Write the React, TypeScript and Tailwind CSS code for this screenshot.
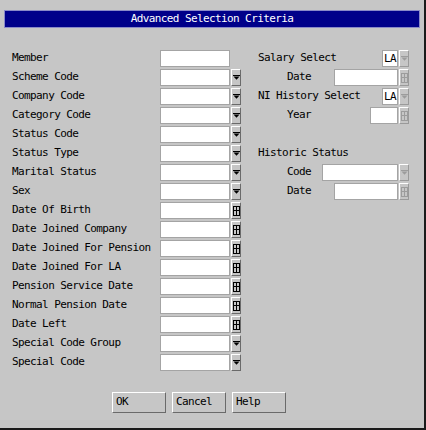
import React from 'react';

const leftRows: { label: string; kind: 'text' | 'drop' | 'cal' }[] = [
    { label: 'Member', kind: 'text' },
    { label: 'Scheme Code', kind: 'drop' },
    { label: 'Company Code', kind: 'drop' },
    { label: 'Category Code', kind: 'drop' },
    { label: 'Status Code', kind: 'drop' },
    { label: 'Status Type', kind: 'drop' },
    { label: 'Marital Status', kind: 'drop' },
    { label: 'Sex', kind: 'drop' },
    { label: 'Date Of Birth', kind: 'cal' },
    { label: 'Date Joined Company', kind: 'cal' },
    { label: 'Date Joined For Pension', kind: 'cal' },
    { label: 'Date Joined For LA', kind: 'cal' },
    { label: 'Pension Service Date', kind: 'cal' },
    { label: 'Normal Pension Date', kind: 'cal' },
    { label: 'Date Left', kind: 'cal' },
    { label: 'Special Code Group', kind: 'drop' },
    { label: 'Special Code', kind: 'drop' },
];

const Caret = ({ disabled }: { disabled?: boolean }) => (
    <svg width="7" height="5" viewBox="0 0 7 5">
        <rect x="0" y="0" width="7" height="1" fill={disabled ? '#9c9c9c' : '#000'} />
        <polygon points="0.5,1.5 6.5,1.5 3.5,4.8" fill={disabled ? '#9c9c9c' : '#000'} />
    </svg>
);

const Cal = ({ disabled }: { disabled?: boolean }) => (
    <svg width="7" height="10" viewBox="0 0 7 10">
        <g fill="none" stroke={disabled ? '#9c9c9c' : '#000'} strokeWidth="1">
            <rect x="0.5" y="0.5" width="6" height="9" />
            <line x1="3.5" y1="0.5" x2="3.5" y2="9.5" />
            <line x1="0.5" y1="4.5" x2="6.5" y2="4.5" />
        </g>
    </svg>
);

const SideBtn = ({ kind, disabled }: { kind: 'drop' | 'cal'; disabled?: boolean }) => (
    <div
        className={
            disabled
                ? 'ml-[1px] w-[10px] h-[17px] flex items-center justify-center border border-t-white border-l-white border-r-[#9a9a9a] border-b-[#9a9a9a]'
                : 'ml-[1px] w-[10px] h-[17px] flex items-center justify-center border border-t-white border-l-white border-r-[#6a6a6a] border-b-[#6a6a6a]'
        }
    >
        {kind === 'drop' ? <Caret disabled={disabled} /> : <Cal disabled={disabled} />}
    </div>
);

const Field = ({ w, children }: { w: string; children?: React.ReactNode }) => (
    <div className={`${w} h-[17px] bg-white border border-[#a4a4a4] flex items-center pl-[1px] leading-none`}>
        {children}
    </div>
);

const App = () => {
    return (
        <div className="w-[426px] h-[430px] bg-[#c6c6c6]">
            <div
                className="w-[426px] h-[430px] bg-[#c6c6c6] border-r-2 border-b-2 border-r-[#1a1a1a] border-b-[#1a1a1a] text-[11px] tracking-[-0.6px] text-black"
                style={{ fontFamily: '"DejaVu Sans Mono", "Liberation Mono", monospace' }}
            >
                <div className="mx-[4px] pt-[10px]">
                    <div className="h-[18px] bg-[#00008a] border border-[#8a8ac8] flex items-center justify-center text-white">
                        Advanced Selection Criteria
                    </div>
                </div>

                <div className="flex pl-[12px] mt-[22px]">
                    <div className="flex flex-col gap-[2px] w-[229px]">
                        {leftRows.map((row) => (
                            <div key={row.label} className="flex items-center h-[17px]">
                                <div className="w-[148px] whitespace-nowrap">{row.label}</div>
                                <Field w="w-[70px]" />
                                {row.kind !== 'text' && <SideBtn kind={row.kind} />}
                            </div>
                        ))}
                    </div>

                    <div className="ml-[17px] w-[151px] flex flex-col gap-[2px]">
                        <div className="flex items-center h-[17px]">
                            <div className="flex-1 whitespace-nowrap">Salary Select</div>
                            <Field w="w-[16px]">LA</Field>
                            <SideBtn kind="drop" disabled />
                        </div>
                        <div className="flex items-center h-[17px]">
                            <div className="flex-1 pl-[29px]">Date</div>
                            <Field w="w-[64px]" />
                            <SideBtn kind="cal" disabled />
                        </div>
                        <div className="flex items-center h-[17px]">
                            <div className="flex-1 whitespace-nowrap">NI History Select</div>
                            <Field w="w-[16px]">LA</Field>
                            <SideBtn kind="drop" disabled />
                        </div>
                        <div className="flex items-center h-[17px]">
                            <div className="flex-1 pl-[29px]">Year</div>
                            <Field w="w-[28px]" />
                            <SideBtn kind="cal" disabled />
                        </div>
                        <div className="h-[17px]" />
                        <div className="flex items-center h-[17px]">
                            <div className="flex-1 whitespace-nowrap">Historic Status</div>
                        </div>
                        <div className="flex items-center h-[17px]">
                            <div className="flex-1 pl-[29px]">Code</div>
                            <Field w="w-[76px]" />
                            <SideBtn kind="drop" disabled />
                        </div>
                        <div className="flex items-center h-[17px]">
                            <div className="flex-1 pl-[29px]">Date</div>
                            <Field w="w-[64px]" />
                            <SideBtn kind="cal" disabled />
                        </div>
                    </div>
                </div>

                <div className="flex gap-[6px] pl-[112px] mt-[21px]">
                    {['OK', 'Cancel', 'Help'].map((label) => (
                        <div
                            key={label}
                            className="w-[54px] h-[21px] flex items-center pl-[3px] border border-t-white border-l-white border-r-[#6a6a6a] border-b-[#6a6a6a]"
                        >
                            {label}
                        </div>
                    ))}
                </div>
            </div>
        </div>
    );
};

export default App;
